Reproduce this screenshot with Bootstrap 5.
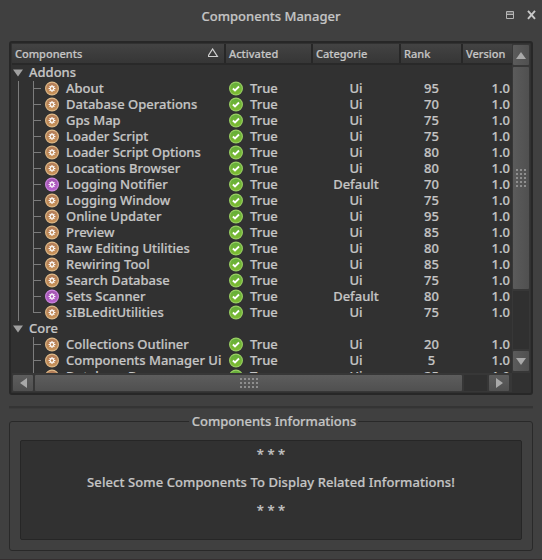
<!DOCTYPE html>
<html lang="en">
<head>
<meta charset="utf-8">
<meta name="viewport" content="width=device-width, initial-scale=1">
<title>Components Manager</title>
<link href="https://cdn.jsdelivr.net/npm/bootstrap@5.3.0/dist/css/bootstrap.min.css" rel="stylesheet">
<style>
html, body { height: 100%; }
body { background: #404040; color: #c5c5c5; font: 500 13px/16px "Noto Sans", sans-serif; -webkit-text-stroke: .2px #c5c5c5; border-bottom: 1px solid #342f30; overflow: hidden; }
svg { display: block; flex: none; }
.titlebar { height: 41px; padding: 0 6px 0 9px; }
.title-text { padding: 8px 0 0 192.5px; width: 340px; white-space: nowrap; }
.win-icons { padding-top: 10px; gap: 12px; }
.tree-frame { margin-left: 9px; width: 524px; height: 354px; background: #313131; border: 2px solid #272727; border-radius: 3px; padding: 1px; }
.view { width: 500px; height: 329px; flex: none; }
.heads { height: 21px; background: #272727; border-bottom: 2px solid #292929; gap: 2px; font-size: 11px; }
.head-cell { background: linear-gradient(#434343, #363636); height: 19px; line-height: 19px; padding-left: 3px; flex: none; white-space: nowrap; }
.c1 { width: 212px; } .c2 { width: 85px; } .c3 { width: 86px; } .c4 { width: 60px; } .c5 { width: 49px; }
.rows { height: 308px; overflow: hidden; }
.tree-row { height: 16px; line-height: 14px; white-space: nowrap; }
.name-col { width: 217px; flex: none; }
.name-text { margin-left: 7px; }
.flag-col { width: 84px; flex: none; }
.cat-col { width: 86px; flex: none; }
.rank-col { width: 65px; flex: none; }
.ver-col { width: 46px; flex: none; }
.scroll-v { width: 18px; background: #373737; padding: 1px 1px 2px; gap: 2px; }
.scroll-h { width: 500px; height: 19px; background: #373737; padding: 2px 2px 1px 1px; gap: 2px; }
.sb { background: linear-gradient(90deg, #5b5b5b, #505050); border-radius: 1px; flex: none; }
.scroll-h .sb { background: linear-gradient(#5d5d5d, #505050); }
.scroll-v .sb-btn { width: 16px; height: 20px; }
.scroll-h .sb-btn { width: 20px; height: 16px; }
.thumb-v { width: 16px; height: 222px; }
.thumb-h { width: 427px; height: 16px; }
.gap-v { height: 58px; width: 16px; background: #303030; }
.gap-h { width: 23px; height: 16px; background: #303030; }
.split { margin: 11px 0 12px 9px; width: 524px; height: 3px; background: #343434; border-bottom: 1px solid #3b3b3b; }
.group { margin-left: 9px; width: 524px; height: 130px; border: 1px solid #292929; border-radius: 3px; padding: 0 10px; }
.group-title { margin: -9px 0 0 169px; width: 169px; padding-left: 1px; height: 16px; background: #404040; white-space: nowrap; }
.info { margin-top: 11px; height: 100px; background: #313131; border: 1px solid #262626; border-radius: 2px; padding-top: 5px; letter-spacing: .08px; }
.info p { height: 28px; margin: 0; }
</style>
</head>
<body>
<svg width="0" height="0" class="position-absolute">
<defs>
<linearGradient id="go" x2="0" y2="1"><stop stop-color="#b07a58"/><stop offset="1" stop-color="#c99358"/></linearGradient>
<linearGradient id="gp" x2="0" y2="1"><stop stop-color="#a155ae"/><stop offset="1" stop-color="#b861cc"/></linearGradient>
<linearGradient id="gg" x2="0" y2="1"><stop stop-color="#63ad3c"/><stop offset="1" stop-color="#7fbc30"/></linearGradient>
<g id="cog" fill="none" stroke="#fff"><circle cx="7" cy="7" r="1.9" stroke-width="1.1"/><path d="M7 3.600v1.400M7 9v1.400M3.600 7h1.400M9 7h1.400M4.600 4.600l1 1M8.400 8.400l1 1M9.400 4.600l-1 1M5.600 8.400l-1 1" stroke-width="1.100"/></g>
<symbol id="orange" viewBox="0 0 14 14"><circle cx="7" cy="7" r="6.4" fill="url(#go)" stroke="#dfba88" stroke-width="1.1"/><use href="#cog"/></symbol>
<symbol id="purple" viewBox="0 0 14 14"><circle cx="7" cy="7" r="6.4" fill="url(#gp)" stroke="#cd86df" stroke-width="1.1"/><use href="#cog"/></symbol>
<symbol id="check" viewBox="0 0 14 14"><circle cx="7" cy="7" r="6.4" fill="url(#gg)" stroke="#9ad064" stroke-width="1.1"/><path d="M3.9 7l2.1 2 4-4" fill="none" stroke="#fff" stroke-width="1.8"/></symbol>
<pattern id="dots" width="4" height="4" patternUnits="userSpaceOnUse"><rect width="2" height="2" fill="#8e8e8e"/></pattern>
</defs>
</svg>
<header class="titlebar d-flex">
  <div class="title-text">Components Manager</div>
  <div class="win-icons d-flex ms-auto">
    <svg width="9" height="10"><path d="M.5 1.500h7v7h-7zM0 4.500h8" fill="none" stroke="#b4b4b4"/><path d="M1 3h6" stroke="#686868" stroke-width="2"/></svg>
    <svg width="9" height="10"><path d="M1 .8l7 8M8 .8l-7 8" fill="none" stroke="#c8c8c8" stroke-width="1.9"/></svg>
  </div>
</header>
<main>
<section class="tree-frame d-flex flex-column">
  <div class="d-flex">
    <div class="view">
      <div class="heads d-flex">
        <div class="head-cell c1 d-flex justify-content-between">Components
          <svg width="12" height="10" class="mt-1 me-1"><path d="M1 8.500L5.800 1l4.800 7.500z" fill="none" stroke="#d0d0d0" stroke-width="1.2" transform="translate(-1.200)"/></svg>
        </div>
        <div class="head-cell c2">Activated</div><div class="head-cell c3">Categorie</div><div class="head-cell c4">Rank</div><div class="head-cell c5">Version</div>
      </div>
      <div class="rows" id="rows"></div>
    </div>
    <div class="scroll-v d-flex flex-column">
      <div class="sb sb-btn"><svg width="16" height="20"><path d="M3 14l5-7 5 7z" fill="#a9a9a9"/></svg></div>
      <div class="sb thumb-v d-flex justify-content-center align-items-center"><svg width="11" height="18"><rect width="11" height="18" fill="url(#dots)"/></svg></div>
      <div class="gap-v"></div>
      <div class="sb sb-btn"><svg width="16" height="20"><path d="M3 7l5 7 5-7z" fill="#a9a9a9"/></svg></div>
    </div>
  </div>
  <div class="scroll-h d-flex">
    <div class="sb sb-btn"><svg width="20" height="16"><path d="M14 3L7 8l7 5z" fill="#a9a9a9"/></svg></div>
    <div class="sb thumb-h d-flex justify-content-center align-items-center"><svg width="18" height="11"><rect width="18" height="11" fill="url(#dots)"/></svg></div>
    <div class="gap-h"></div>
    <div class="sb sb-btn"><svg width="20" height="16"><path d="M7 3l7 5-7 5z" fill="#a9a9a9"/></svg></div>
  </div>
</section>
<div class="split"></div>
<section class="group">
  <div class="group-title text-center">Components Informations</div>
  <div class="info text-center"><p>* * *</p><p>Select Some Components To Display Related Informations!</p><p>* * *</p></div>
</section>
</main>
<script>
const groups = [
  ["Addons", true, [["About","Ui",95],["Database Operations","Ui",70],["Gps Map","Ui",75],["Loader Script","Ui",75],["Loader Script Options","Ui",80],["Locations Browser","Ui",80],["Logging Notifier","Default",70],["Logging Window","Ui",75],["Online Updater","Ui",95],["Preview","Ui",85],["Raw Editing Utilities","Ui",80],["Rewiring Tool","Ui",85],["Search Database","Ui",75],["Sets Scanner","Default",80],["sIBLeditUtilities","Ui",75]]],
  ["Core", false, [["Collections Outliner","Ui",20],["Components Manager Ui","Ui",5],["Database Browser","Ui",25]]]
];
let out = "";
for (const [group, closed, items] of groups) {
  out += `<div class="tree-row d-flex"><svg width="17" height="16"><path d="M1 4.500h10l-5 7z" fill="#a0a0a0"/></svg><span>${group}</span></div>`;
  items.forEach(([name, cat, rank], i) => {
    const end = closed && i === items.length - 1;
    const lines = (closed ? "M6.5 0v16" : "") + `M21.5 0v${end ? 8 : 16}M22 7.5h7`;
    out += `<div class="tree-row d-flex"><div class="name-col d-flex"><svg width="33" height="16"><path d="${lines}" stroke="#7c7c7c" fill="none"/></svg>
      <svg width="14" height="15"><use href="#${cat === "Ui" ? "orange" : "purple"}"/></svg><span class="name-text">${name}</span></div>
      <div class="flag-col d-flex"><svg width="14" height="15"><use href="#check"/></svg><span class="name-text">True</span></div>
      <div class="cat-col text-center">${cat}</div><div class="rank-col text-center">${rank}</div><div class="ver-col text-end">1.0</div></div>`;
  });
}
document.getElementById("rows").innerHTML = out;
</script>
<script src="https://cdn.jsdelivr.net/npm/bootstrap@5.3.0/dist/js/bootstrap.bundle.min.js"></script>
</body>
</html>
